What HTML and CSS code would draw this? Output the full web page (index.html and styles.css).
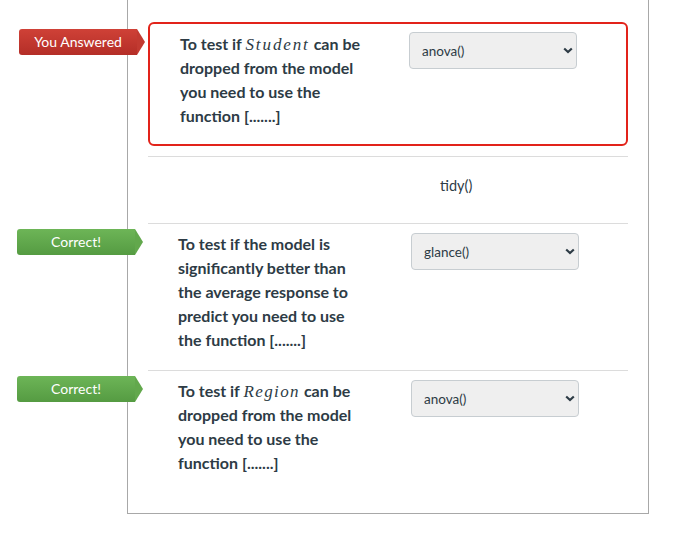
FILE: index.html
```html
<!DOCTYPE html>
<html lang="en">
<head>
<meta charset="utf-8">
<title>Quiz matching</title>
<link rel="stylesheet" href="styles.css">
</head>
<body>
<div class="quiz">
  <div class="row row-wrong">
    <div class="badge badge-red">You Answered</div>
    <div class="question">To test if <span class="math">Student</span> can be dropped from the model you need to use the function [.......]</div>
    <div class="select-wrap">
      <select class="select"><option>anova()</option></select>
      <svg class="chev" width="10" height="7" viewBox="0 0 10 7"><polyline points="1.2,1.5 5,5 8.8,1.5" fill="none" stroke="#2d3b45" stroke-width="2.2"/></svg>
    </div>
  </div>
  <div class="row row-plain">
    <div class="distractor">tidy()</div>
  </div>
  <div class="row row-tall">
    <div class="badge badge-green">Correct!</div>
    <div class="question">To test if the model is significantly better than the average response to predict you need to use the function [.......]</div>
    <div class="select-wrap">
      <select class="select"><option>glance()</option></select>
      <svg class="chev" width="10" height="7" viewBox="0 0 10 7"><polyline points="1.2,1.5 5,5 8.8,1.5" fill="none" stroke="#2d3b45" stroke-width="2.2"/></svg>
    </div>
  </div>
  <div class="row">
    <div class="badge badge-green">Correct!</div>
    <div class="question">To test if <span class="math math-r">Region</span> can be dropped from the model you need to use the function [.......]</div>
    <div class="select-wrap">
      <select class="select"><option>anova()</option></select>
      <svg class="chev" width="10" height="7" viewBox="0 0 10 7"><polyline points="1.2,1.5 5,5 8.8,1.5" fill="none" stroke="#2d3b45" stroke-width="2.2"/></svg>
    </div>
  </div>
</div>
</body>
</html>
```

FILE: styles.css
```css
html, body {
  margin: 0;
  padding: 0;
  background: #ffffff;
}

body {
  font-family: Lato, "Liberation Sans", sans-serif;
  color: #2d3b45;
}

.quiz {
  margin-left: 127px;
  width: 480px;
  padding: 22px 20px 21px 20px;
  border: 1px solid #a8a8a8;
  border-top: none;
}

.row {
  position: relative;
  display: flex;
  justify-content: space-between;
  align-items: flex-start;
  padding: 8px 49px 17px 30px;
  border-top: 1px solid #dcdcdc;
}

.row-tall {
  padding-bottom: 18px;
}

.row-wrong {
  border: 2px solid #e2231a;
  border-radius: 6px;
  padding: 8px 49px 16px 30px;
  margin-bottom: 10px;
}

.row-plain {
  display: block;
  padding: 17px 0 25px 292px;
}

.distractor {
  font-size: 14.5px;
  line-height: 24px;
}

.question {
  width: 190px;
  font-size: 16px;
  font-weight: 700;
  line-height: 24px;
}

.math {
  font-family: "Liberation Serif", serif;
  font-style: italic;
  font-weight: 400;
  font-size: 17px;
  line-height: 1;
  letter-spacing: 1.9px;
}

.math-r {
  letter-spacing: 1.4px;
}

.select-wrap {
  position: relative;
  width: 168px;
  height: 37px;
}

.row .select-wrap {
  margin-top: 1px;
}

.row-wrong .select-wrap {
  margin-top: 0;
}

.select {
  appearance: none;
  -webkit-appearance: none;
  width: 100%;
  height: 100%;
  margin: 0;
  padding: 0 20px 0 12px;
  border: 1px solid #c7cdd1;
  border-radius: 4px;
  background: #efefef;
  font-family: Lato, "Liberation Sans", sans-serif;
  font-size: 13.5px;
  color: #2d3b45;
}

.chev {
  position: absolute;
  right: 4px;
  top: 15px;
}

.badge {
  position: absolute;
  top: 5px;
  left: -131px;
  width: 118px;
  height: 26px;
  line-height: 26px;
  border-radius: 3px 0 0 3px;
  color: #ffffff;
  font-size: 14px;
  text-align: center;
  box-sizing: border-box;
}

.badge::after {
  content: "";
  position: absolute;
  left: 100%;
  top: 0;
  width: 0;
  height: 0;
  border-top: 13px solid transparent;
  border-bottom: 13px solid transparent;
  border-left: 8px solid #c03930;
}

.badge-red {
  background: linear-gradient(#cf4137, #b42e27);
}

.badge-red::after {
  border-left-color: #c23a31;
}

.badge-green {
  background: linear-gradient(#6db557, #559b42);
}

.badge-green::after {
  border-left-color: #62a84c;
}
```
